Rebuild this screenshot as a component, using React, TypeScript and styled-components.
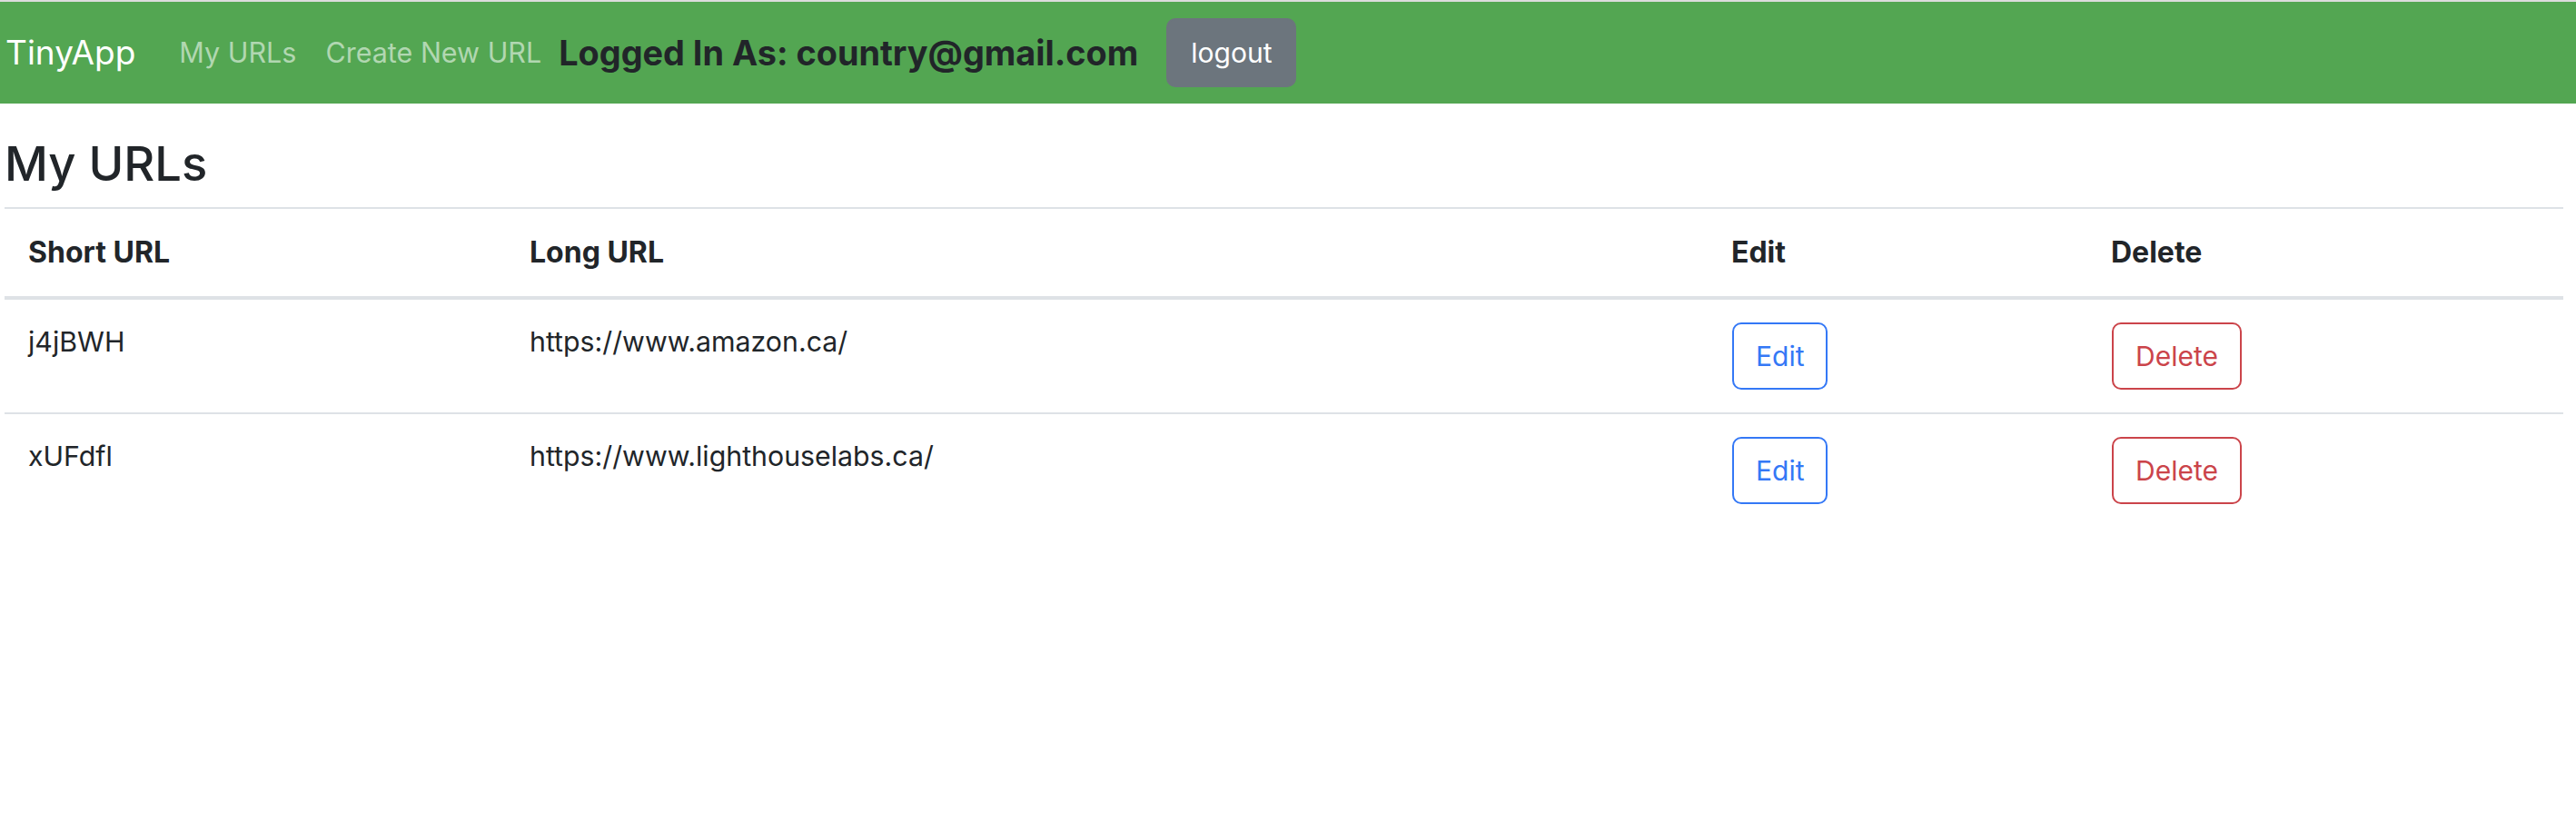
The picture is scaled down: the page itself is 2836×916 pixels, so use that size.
import React from "react";
import styled, { createGlobalStyle } from "styled-components";

const Global = createGlobalStyle`
  html, body { margin: 0; padding: 0; background: #ffffff; }
  body { font-family: "Inter", "Noto Sans", sans-serif; color: #212529; }
`;

const Page = styled.div`
  width: 2836px;
  min-height: 916px;
  background: #ffffff;
`;

const NavBar = styled.nav`
  display: flex;
  align-items: center;
  height: 112px;
  border-top: 2px solid #dcdcdc;
  background: #53a652;
  padding-left: 6px;
`;

const Brand = styled.span`
  font-size: 37px;
  line-height: 1.5;
  color: #ffffff;
  margin-right: 48px;
`;

const NavLink = styled.span<{ $gap: number }>`
  font-size: 30.5px;
  line-height: 1.5;
  color: #b1d7b1;
  margin-right: ${(p) => p.$gap}px;
`;

const LoggedIn = styled.span`
  font-size: 37.8px;
  font-weight: 700;
  color: #212529;
  margin-right: 31px;
`;

const LogoutButton = styled.button`
  font-family: inherit;
  font-size: 30px;
  line-height: 42px;
  color: #ffffff;
  background: #6c757d;
  border: 2px solid #6c757d;
  border-radius: 10px;
  padding: 15px 25px;
  cursor: pointer;
`;

const Main = styled.main`
  padding: 0 14px 0 5px;
`;

const Title = styled.h2`
  margin: 35px 0 17px 0;
  font-size: 52.5px;
  font-weight: 500;
  line-height: 62px;
  color: #212529;
`;

const Table = styled.table`
  width: 2817px;
  border-collapse: collapse;
  table-layout: fixed;
  border-top: 2px solid #dee2e6;
  font-size: 30.3px;
  line-height: 42px;
`;

const HeadCell = styled.th`
  text-align: left;
  font-size: 32px;
  font-weight: 700;
  padding: 27px 26px;
  border-bottom: 4px solid #dee2e6;
  vertical-align: top;
`;

const BodyRow = styled.tr<{ $last?: boolean }>`
  border-bottom: ${(p) => (p.$last ? "none" : "2px solid #dee2e6")};
`;

const Cell = styled.td`
  padding: 25px 26px;
  vertical-align: top;
  color: #212529;
`;

const OutlineButton = styled.button<{ $tone: "blue" | "red" }>`
  font-family: inherit;
  font-size: 30px;
  line-height: 42px;
  padding: 14px 24px;
  background: #ffffff;
  border-radius: 10px;
  border: 2px solid ${(p) => (p.$tone === "blue" ? "#3478f6" : "#cb444a")};
  color: ${(p) => (p.$tone === "blue" ? "#3478f6" : "#cb444a")};
  cursor: pointer;
  margin-left: 1px;
`;

const rows = [
  { short: "j4jBWH", long: "https://www.amazon.ca/" },
  { short: "xUFdfl", long: "https://www.lighthouselabs.ca/" },
];

export default function App() {
  return (
    <Page>
      <Global />
      <NavBar>
        <Brand>TinyApp</Brand>
        <NavLink $gap={32}>My URLs</NavLink>
        <NavLink $gap={19}>Create New URL</NavLink>
        <LoggedIn>Logged In As: country@gmail.com</LoggedIn>
        <LogoutButton>logout</LogoutButton>
      </NavBar>
      <Main>
        <Title>My URLs</Title>
        <Table>
          <colgroup>
            <col style={{ width: 552 }} />
            <col style={{ width: 1323 }} />
            <col style={{ width: 418 }} />
            <col style={{ width: 524 }} />
          </colgroup>
          <thead>
            <tr>
              <HeadCell>Short URL</HeadCell>
              <HeadCell>Long URL</HeadCell>
              <HeadCell>Edit</HeadCell>
              <HeadCell>Delete</HeadCell>
            </tr>
          </thead>
          <tbody>
            {rows.map((r, i) => (
              <BodyRow key={r.short} $last={i === rows.length - 1}>
                <Cell>{r.short}</Cell>
                <Cell>{r.long}</Cell>
                <Cell>
                  <OutlineButton $tone="blue">Edit</OutlineButton>
                </Cell>
                <Cell>
                  <OutlineButton $tone="red">Delete</OutlineButton>
                </Cell>
              </BodyRow>
            ))}
          </tbody>
        </Table>
      </Main>
    </Page>
  );
}
